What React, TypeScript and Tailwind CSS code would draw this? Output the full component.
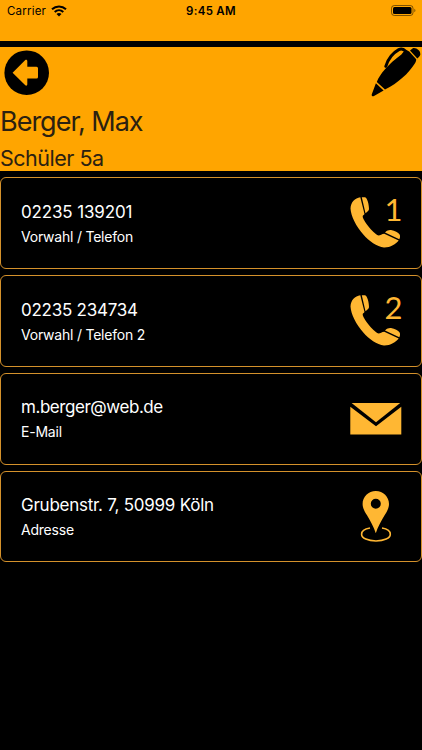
import React from 'react';

const PhoneIcon: React.FC<{ digit: string }> = ({ digit }) => (
  <svg viewBox="0 0 54 54" className="h-[54px] w-[54px] shrink-0 overflow-visible fill-[#ffb733]">
    <path d="M11.3 1.3C6 1.9 1.7 6.3 1.5 12.6C2 20.3 7 30.3 14.3 38.6C20 45.3 28 50.8 35 51.6C41 51.8 47 48.1 49.7 44.6L35.3 37.8C33 38 31 39.6 29.7 39.6C26 38.8 15 26.3 13.7 21C13.5 19.3 15 19.1 15.5 18.1Z" />
    <path d="M12.8 1.3H16C18.5 2.3 20 8.3 20 13.3C19.8 14.9 17.5 16.3 16.5 17.3Z" />
    <path d="M36 36.6C38 34.3 40.5 33.8 42 34.1C46 34.8 49 36.3 50.8 38.8C51.3 40.3 51 42.3 50.3 43.3Z" />
    <text x="35.6" y="25.4" className="font-['Lato',sans-serif] text-[31px]">{digit}</text>
  </svg>
);

const MailIcon: React.FC = () => (
  <svg viewBox="0 0 54 54" className="h-[54px] w-[54px] shrink-0 fill-[#ffb733]">
    <path d="M2.6 11H51.2L27 30.3Z" />
    <path d="M1.3 14.8L27 34.3L52.3 14.8V42.6H1.3Z" />
  </svg>
);

const PinIcon: React.FC = () => (
  <svg viewBox="0 0 54 54" className="mt-[2px] h-[54px] w-[54px] shrink-0 fill-[#ffb733]">
    <path fillRule="evenodd" d="M26.8 1C19.4 1 13.6 6.8 13.6 14C13.6 18 15.6 21.5 18 25.3C21.3 30.6 24.8 37 26.8 43.3C28.8 37 32.3 30.6 35.6 25.3C38 21.5 40 18 40 14C40 6.8 34.2 1 26.8 1ZM26.8 8.7a5 5 0 1 1 0 10a5 5 0 1 1 0-10Z" />
    <path d="M21 38C15.5 38.8 12.6 41.3 12.6 44.2C12.6 48.2 19 51 27 51S41.3 48.2 41.3 44.2C41.3 41.3 38.5 38.8 33 38" fill="none" stroke="#ffb733" strokeWidth="1.6" />
  </svg>
);

const contacts = [
  { value: '02235 139201', label: 'Vorwahl / Telefon', tracking: 'tracking-[-0.15px]', icon: <PhoneIcon digit="1" /> },
  { value: '02235 234734', label: 'Vorwahl / Telefon 2', tracking: 'tracking-[-0.25px]', icon: <PhoneIcon digit="2" /> },
  { value: 'm.berger@web.de', label: 'E-Mail', tracking: 'tracking-[-0.45px]', icon: <MailIcon /> },
  { value: 'Grubenstr. 7, 50999 Köln', label: 'Adresse', tracking: 'tracking-[-0.25px]', icon: <PinIcon /> },
];

const StatusBar: React.FC = () => (
  <div className="grid h-[41px] grid-cols-3 items-start bg-[#ffa500] pt-[3px] text-black">
    <div className="flex items-center gap-[5px] pl-[7px]">
      <span className="text-[11.5px] leading-4 tracking-[0.2px]">Carrier</span>
      <svg viewBox="0 0 16 12" className="h-3 w-4 fill-none stroke-black stroke-2">
        <path d="M1 4.3C5 .5 11 .5 15 4.3" />
        <path d="M3.7 7C6.2 4.7 9.8 4.7 12.3 7" />
        <path d="M8 11.5L5.5 9C7 7.8 9 7.8 10.5 9Z" className="fill-black stroke-none" />
      </svg>
    </div>
    <span className="text-center text-[11.5px] leading-4 font-semibold tracking-[0.3px]">9:45 AM</span>
    <div className="flex justify-end pt-[2px] pr-[6px]">
      <svg viewBox="0 0 25 11" className="h-[11px] w-[25px]">
        <rect x=".5" y=".5" width="21.5" height="10" rx="2.8" fill="none" stroke="#000" strokeOpacity=".5" />
        <rect x="2" y="2" width="18.5" height="7" rx="1.5" />
        <path d="M23.3 3.8C24.8 4.4 24.8 6.6 23.3 7.2Z" opacity=".5" />
      </svg>
    </div>
  </div>
);

const App: React.FC = () => {
  return (
    <div className="h-[750px] w-full overflow-hidden bg-black font-['Inter',sans-serif]">
      <StatusBar />

      <header className="mt-[6px] h-[124px] bg-[#ffa500] text-[#2b2111]">
        <div className="flex h-[55px] justify-between">
          <svg viewBox="0 0 46 46" className="mt-[3px] ml-1 h-[46px] w-[46px]">
            <circle cx="22.7" cy="22.7" r="22.3" />
            <path d="M8.6 22.7L21.3 10C22.3 9.2 23.3 10 23.3 11V16.8H32.5Q34 16.8 34 18.3V27Q34 28.5 32.5 28.5H23.3V34.3C23.3 35.5 22.3 36.2 21.3 35.3Z" fill="#ffa500" />
          </svg>
          <svg viewBox="0 0 54 52" className="h-[52px] w-[54px]">
            <path d="M7.9 36.2L15.6 43.4L6 49C4.6 49.8 3.2 48.6 3.8 47.2Z" />
            <path d="M8.8 35C12 27 20 17.5 33.4 7.6L36.5 3.6Q38.5 2.6 41.2 4.6L48.2 12.3C48.3 13.8 47.8 15 47 16.2C40.5 26.5 30 36 17 42.6Z" />
            <path d="M42 3.4L44.8 1.2C48.5.4 52.5 3.8 52.3 7.2C52.2 8.8 50.8 10.2 49.3 11.4Z" />
            <path d="M17.8 19.4C19.8 12.5 25 5.8 30.8 2.6C33.2 1.4 35.6 2.2 37.5 4" fill="none" stroke="#000" strokeWidth="3" strokeLinecap="round" />
          </svg>
        </div>
        <h1 className="h-[42px] text-[27px] leading-[40px] tracking-[-1px]">Berger, Max</h1>
        <h2 className="text-[21.5px] leading-[28px] tracking-[-0.5px]">Schüler 5a</h2>
      </header>

      <main className="mt-[6.3px] flex flex-col gap-[6px]">
        {contacts.map((contact) => (
          <div
            key={contact.label}
            className="flex h-[91.75px] items-center justify-between rounded-[6px] border border-[#d4912b] pr-[18px] pl-5"
          >
            <div className="pt-[1.4px] text-white">
              <p className={`text-[17px] leading-[26px] ${contact.tracking}`}>{contact.value}</p>
              <p className="text-[14px] leading-6 tracking-[-0.22px]">{contact.label}</p>
            </div>
            {contact.icon}
          </div>
        ))}
      </main>
    </div>
  );
};

export default App;
